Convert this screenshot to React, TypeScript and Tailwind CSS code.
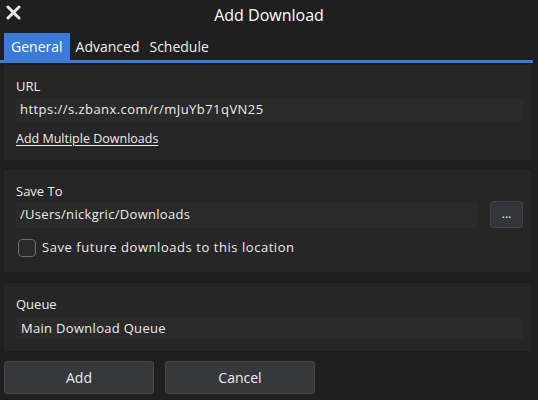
import React from "react";

export default function App() {
  return (
    <div
      className="w-[538px] h-[400px] bg-[#1f1f1f] text-[#ececec] overflow-hidden flex flex-col"
      style={{ fontFamily: '"Open Sans", "Noto Sans", sans-serif' }}
    >
      {/* Title bar */}
      <div className="relative h-[33px] flex items-center justify-center">
        <svg className="absolute left-[6px] top-[5px]" width="15" height="15" viewBox="0 0 15 15">
          <path d="M2 2 L13 13 M13 2 L2 13" stroke="#e6e6e6" strokeWidth="3" strokeLinecap="round" />
        </svg>
        <span className="text-[16px] text-white mt-[-3px]">Add Download</span>
      </div>
      {/* Tabs */}
      <div className="flex h-[30px] items-stretch pl-[4px] border-b-[3px] border-[#3b7ad6] mr-[5px]">
        <div className="bg-[#3b7ad6] text-white text-[14px] px-[7px] flex items-center">General</div>
        <div className="text-[14px] pl-[6px] pr-[6px] flex items-center text-[#eeeeee]">Advanced</div>
        <div className="text-[14px] px-[4px] flex items-center text-[#eeeeee]">Schedule</div>
      </div>
      <div className="flex flex-col pl-[4px] pr-[7px]">
        {/* URL panel */}
        <div className="mt-[2px] h-[95px] bg-[#262626] px-[12px] pt-[12px] flex flex-col">
          <div className="text-[13px] leading-[18px]">URL</div>
          <div className="mt-[4px] h-[22px] bg-[#2a2a2a] flex items-center px-[4px] mr-[-4px]">
            <span className="text-[13px] tracking-[0.45px]">https://s.zbanx.com/r/mJuYb71qVN25</span>
          </div>
          <div className="mt-[9px] text-[12.5px] underline underline-offset-2">Add Multiple Downloads</div>
        </div>
        {/* Save To */}
        <div className="mt-[10px] h-[102px] bg-[#262626] px-[12px] pt-[12px] flex flex-col">
          <div className="text-[13px] leading-[18px]">Save To</div>
          <div className="mt-[1px] flex items-center gap-[13px] mr-[-4px]">
            <div className="flex-1 h-[26px] bg-[#2a2a2a] flex items-center px-[4px]">
              <span className="text-[13px] tracking-[0.3px]">/Users/nickgric/Downloads</span>
            </div>
            <div className="w-[33px] h-[27px] bg-[#34353a] border border-[#404145] rounded-[3px] flex items-center justify-center text-[12px] leading-none pb-[2px]">
              ...
            </div>
          </div>
          <div className="mt-[10px] flex items-center gap-[6px] pl-[2px]">
            <div className="w-[18px] h-[18px] rounded-[4px] border border-[#6b6b6b] bg-[#2a2a2a]" />
            <span className="text-[13px] tracking-[0.55px]">Save future downloads to this location</span>
          </div>
        </div>
        {/* Queue */}
        <div className="mt-[11px] h-[68px] bg-[#262626] px-[12px] pt-[12px] flex flex-col">
          <div className="text-[13px] leading-[18px]">Queue</div>
          <div className="mt-[5px] h-[21px] bg-[#2a2a2a] flex items-center px-[5px] mr-[-4px]">
            <span className="text-[13px] tracking-[0.3px]">Main Download Queue</span>
          </div>
        </div>
        {/* Buttons */}
        <div className="mt-[10px] flex gap-[11px]">
          <div className="w-[150px] h-[33px] bg-[#37383c] border border-[#46474b] rounded-[3px] flex items-center justify-center text-[14px]">Add</div>
          <div className="w-[150px] h-[33px] bg-[#37383c] border border-[#46474b] rounded-[3px] flex items-center justify-center text-[14px]">Cancel</div>
        </div>
      </div>
    </div>
  );
}
